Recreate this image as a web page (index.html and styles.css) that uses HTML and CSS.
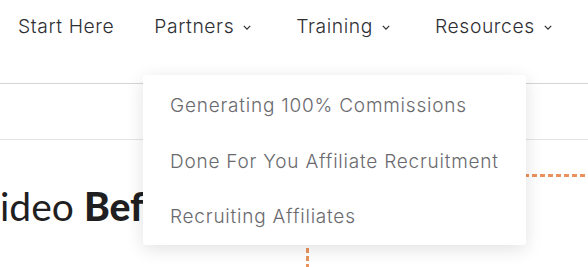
FILE: index.html
```html
<!DOCTYPE html>
<html>
<head>
<meta charset="utf-8">
<link rel="stylesheet" href="styles.css">
</head>
<body>
<header class="topbar">
  <nav class="nav">
    <a class="nav-item first">Start Here</a>
    <a class="nav-item has-sub">Partners <svg class="chev" viewBox="0 0 10 6"><path d="M1 1l4 4 4-4" fill="none" stroke="currentColor" stroke-width="1.6"/></svg></a>
    <a class="nav-item has-sub">Training <svg class="chev" viewBox="0 0 10 6"><path d="M1 1l4 4 4-4" fill="none" stroke="currentColor" stroke-width="1.6"/></svg></a>
    <a class="nav-item has-sub">Resources <svg class="chev" viewBox="0 0 10 6"><path d="M1 1l4 4 4-4" fill="none" stroke="currentColor" stroke-width="1.6"/></svg></a>
  </nav>
</header>
<div class="subbar"></div>
<main class="content">
  <h1 class="title">ideo <b>Before</b></h1>
  <div class="dash-h"></div>
  <div class="dash-v"></div>
</main>
<ul class="dropdown">
  <li>Generating 100% Commissions</li>
  <li>Done For You Affiliate Recruitment</li>
  <li>Recruiting Affiliates</li>
</ul>
</body>
</html>
```
FILE: styles.css
```css
* { box-sizing: border-box; }
html, body { margin: 0; padding: 0; background: #fff; overflow: hidden; }
body { width: 588px; height: 267px; position: relative; font-family: Inter, "Noto Sans", sans-serif; }

.topbar {
  height: 84px;
  border-bottom: 1px solid #d4d4d4;
}
.nav {
  display: flex;
  align-items: center;
  padding: 14px 0 0 18px;
  gap: 45px;
}
.nav-item {
  font-size: 19.3px;
  font-weight: 300;
  color: #2e2f34;
  letter-spacing: 0.6px;
  display: flex;
  align-items: center;
  white-space: nowrap;
}
.nav-item.first { margin-right: -5px; }
.chev {
  width: 8px;
  height: 5px;
  margin-left: 9px;
  margin-top: 2px;
  color: #333;
}

.subbar {
  height: 56px;
  border-bottom: 1px solid #e4e4e4;
}

.content {
  position: relative;
  height: 127px;
  padding-top: 43px;
}
.title {
  margin: 0;
  width: 143px;
  overflow: hidden;
  font-family: Lato, "Noto Sans", sans-serif;
  font-weight: 400;
  font-size: 39px;
  color: #1f1f22;
  line-height: 46px;
  white-space: nowrap;
}
.title b { font-weight: 900; }

.dash-h {
  position: absolute;
  left: 420px;
  right: 0;
  top: 34px;
  height: 3px;
  background: repeating-linear-gradient(90deg, #e8935c 0 5px, transparent 5px 8px);
}
.dash-v {
  position: absolute;
  left: 306px;
  top: 60px;
  bottom: 0;
  width: 3px;
  background: repeating-linear-gradient(180deg, #e8935c 0 5px, transparent 5px 8px);
}

.dropdown {
  position: absolute;
  left: 143px;
  top: 75px;
  width: 383px;
  margin: 0;
  list-style: none;
  background: #fff;
  border-radius: 3px;
  box-shadow: 0 4px 18px rgba(0,0,0,0.12);
  padding: 3px 0 0;
}
.dropdown li {
  height: 55.5px;
  display: flex;
  align-items: center;
  padding-left: 27px;
  font-size: 19px;
  font-weight: 300;
  letter-spacing: 0.78px;
  color: #6a6a6e;
  white-space: nowrap;
}
```
